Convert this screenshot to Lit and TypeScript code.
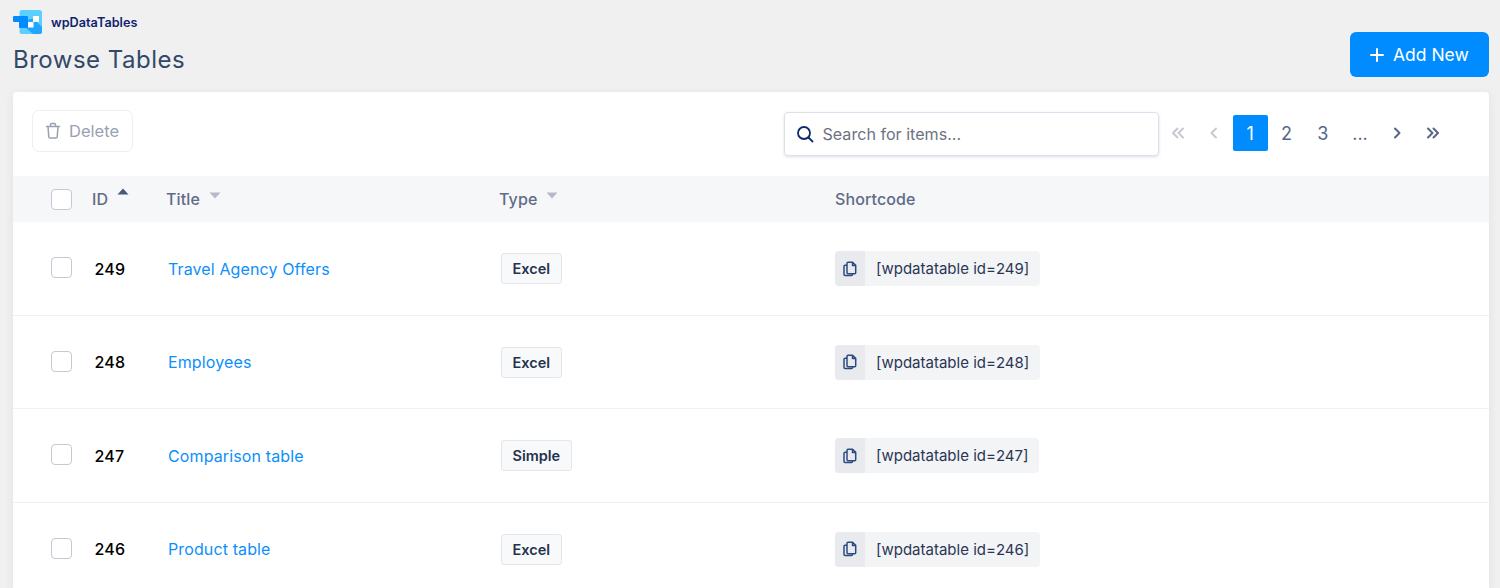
import { LitElement, css, html, svg } from 'lit';
import { customElement, property } from 'lit/decorators.js';

type Row = { id: number; title: string; type: string };

const rows: Row[] = [
  { id: 249, title: 'Travel Agency Offers', type: 'Excel' },
  { id: 248, title: 'Employees', type: 'Excel' },
  { id: 247, title: 'Comparison table', type: 'Simple' },
  { id: 246, title: 'Product table', type: 'Excel' },
];

const logo = svg`<svg width="29" height="24" viewBox="0 0 29 24">
  <rect x="6.5" y="0" width="22.5" height="24" rx="2.5" fill="#5ccfff"/>
  <path d="M12 17 L20 24 L26.5 24 Q29 24 29 21.5 L29 17 L21 9 L16 9 Z" fill="#1ea7fd"/>
  <rect x="0" y="6" width="12" height="6" rx="1" fill="#008cff"/>
  <rect x="6" y="6" width="9" height="12" rx="1" fill="#008cff"/>
  <rect x="20" y="6" width="6" height="6" fill="#ffffff"/>
  <rect x="15" y="12" width="5.5" height="5.5" fill="#ffffff"/>
</svg>`;

const copyIcon = svg`<svg width="16" height="18" viewBox="0 0 16 18" fill="none" stroke="#2a4a80" stroke-width="1.5" stroke-linejoin="round">
  <path d="M5 3.2 a1 1 0 0 1 1-1 h4.5 l3.2 3.2 v7.4 a1 1 0 0 1-1 1 H6 a1 1 0 0 1-1-1 Z"/>
  <path d="M5 5.2 H3 a1 1 0 0 0-1 1 v8.4 a1 1 0 0 0 1 1 h6.5 a1 1 0 0 0 1-1 v-1.7"/>
  <path d="M10.5 2.2 v3.2 h3.2"/>
</svg>`;

const chevron = (d: string, color: string) => svg`<svg width="18" height="18" viewBox="0 0 18 18" fill="none" stroke=${color} stroke-width="2" stroke-linecap="round" stroke-linejoin="round"><path d=${d}/></svg>`;

@customElement('sort-caret')
export class SortCaret extends LitElement {
  @property({ type: Boolean }) active = false;

  render() {
    return html`<svg class=${this.active ? 'up' : 'down'} width="12" height="7" viewBox="0 0 12 7">
      <path d=${this.active ? 'M6 0.5 L11.5 6.5 H0.5 Z' : 'M0.5 0.5 H11.5 L6 6.5 Z'} />
    </svg>`;
  }

  static styles = css`
    :host { display: inline-flex; }
    .up { fill: #475a7c; }
    .down { fill: #b5bac8; }
  `;
}

@customElement('app-root')
export class AppRoot extends LitElement {
  render() {
    return html`
      <div class="page">
        <header class="head">
          <div>
            <div class="brand">${logo}<span>wpDataTables</span></div>
            <h1>Browse Tables</h1>
          </div>
          <button class="add">
            <svg width="16" height="16" viewBox="0 0 16 16" stroke="#fff" stroke-width="2" stroke-linecap="round"><path d="M8 2 V14 M2 8 H14"/></svg>
            Add New
          </button>
        </header>

        <section class="card">
          <div class="toolbar">
            <button class="delete">
              <svg width="16" height="18" viewBox="0 0 16 18" fill="none" stroke="#9aa1b2" stroke-width="1.5" stroke-linecap="round" stroke-linejoin="round">
                <path d="M1.5 4.5 H14.5 M5.5 4.5 V2.5 a1 1 0 0 1 1-1 h3 a1 1 0 0 1 1 1 V4.5 M3 4.5 L3.8 15 a1.2 1.2 0 0 0 1.2 1 h6 a1.2 1.2 0 0 0 1.2-1 L13 4.5"/>
              </svg>
              Delete
            </button>
            <div class="search">
              <svg width="18" height="18" viewBox="0 0 18 18" fill="none" stroke="#10296e" stroke-width="1.8" stroke-linecap="round"><circle cx="8" cy="8" r="6"/><path d="M12.5 12.5 L16.5 16.5"/></svg>
              <span>Search for items...</span>
            </div>
            <nav class="pager">
              <span class="pg">${chevron('M8.5 4.5 L4 9 L8.5 13.5 M14 4.5 L9.5 9 L14 13.5', '#c6c9d2')}</span>
              <span class="pg">${chevron('M11 4.5 L6.5 9 L11 13.5', '#c6c9d2')}</span>
              <span class="pg current">1</span>
              <span class="pg">2</span>
              <span class="pg">3</span>
              <span class="pg dots">...</span>
              <span class="pg next-one">${chevron('M7 4.5 L11.5 9 L7 13.5', '#566689')}</span>
              <span class="pg next">${chevron('M4 4.5 L8.5 9 L4 13.5 M9.5 4.5 L14 9 L9.5 13.5', '#566689')}</span>
            </nav>
          </div>

          <div class="grid thead">
            <span class="check"></span>
            <span class="th">ID <sort-caret class="c-id" active></sort-caret></span>
            <span class="th">Title <sort-caret></sort-caret></span>
            <span class="th">Type <sort-caret></sort-caret></span>
            <span class="th">Shortcode</span>
          </div>

          ${rows.map(r => html`
            <div class="grid row">
              <span class="check"></span>
              <span class="id">${r.id}</span>
              <a class="title">${r.title}</a>
              <span class="type-cell"><span class="type">${r.type}</span></span>
              <span class="code">
                <span class="copy">${copyIcon}</span>
                <span class="text">[wpdatatable id=${r.id}]</span>
              </span>
            </div>
          `)}
        </section>
      </div>
    `;
  }

  static styles = css`
    :host {
      display: block;
      height: 588px;
      overflow: hidden;
      background: #f0f0f1;
      font-family: Inter, "Liberation Sans", sans-serif;
    }
    .page { padding: 10px 11px 0 13px; }
    .head {
      display: flex;
      justify-content: space-between;
      align-items: flex-start;
      height: 82px;
    }
    .brand {
      display: flex;
      align-items: center;
      gap: 9px;
      height: 24px;
      font-size: 12.7px;
      font-weight: 600;
      color: #10256e;
    }
    .brand svg { display: block; }
    h1 {
      margin: 9px 0 0;
      font-size: 24px;
      line-height: 34px;
      font-weight: 400;
      letter-spacing: 0.5px;
      color: #334868;
    }
    button { font-family: inherit; cursor: pointer; }
    .add {
      display: flex;
      align-items: center;
      gap: 8px;
      margin-top: 22px;
      width: 139px;
      height: 45px;
      padding: 0 0 0 19px;
      border: 0;
      border-radius: 6px;
      background: #008cff;
      color: #fff;
      font-size: 17.5px;
      font-weight: 400;
    }
    .card {
      background: #fff;
      border-radius: 4px;
      box-shadow: 0 2px 12px rgba(30, 40, 70, 0.06);
    }
    .toolbar {
      display: flex;
      align-items: flex-start;
      height: 84px;
      padding: 18px 0 0 19px;
      box-sizing: border-box;
    }
    .delete {
      display: flex;
      align-items: center;
      gap: 8px;
      width: 101px;
      height: 42px;
      padding: 0 0 0 12px;
      background: #fff;
      border: 1px solid #eceef2;
      border-radius: 7px;
      color: #9aa1b2;
      font-size: 16.5px;
    }
    .search {
      display: flex;
      align-items: center;
      gap: 8.5px;
      width: 375px;
      height: 44px;
      margin: 2px 0 0 651px;
      padding-left: 11px;
      box-sizing: border-box;
      border: 1px solid #dcdfec;
      border-radius: 4px;
      box-shadow: 0 1px 3px rgba(40, 50, 90, 0.16);
      color: #6d7280;
      font-size: 16.1px;
    }
    .pager {
      display: flex;
      align-items: center;
      margin: 5px 0 0 1px;
    }
    .pg {
      display: flex;
      align-items: center;
      justify-content: center;
      width: 35px;
      height: 36px;
      margin-right: 1.3px;
      border-radius: 2px;
      color: #566689;
      font-size: 18px;
    }
    .current { background: #008cff; color: #fff; }
    .dots { align-items: flex-end; padding: 0 0 8px 2px; box-sizing: border-box; line-height: 1; }
    .next svg { margin-left: 2px; }
    .next-one svg { margin-left: 3px; }
    .grid {
      display: grid;
      grid-template-columns: 41px 74px 333px 336px 1fr;
      align-items: center;
      padding-left: 38px;
    }
    .thead { height: 46px; background: #f6f7f9; }
    .row { height: 93.5px; border-bottom: 1px solid #f0f1f4; box-sizing: border-box; }
    .check {
      display: block;
      width: 19px;
      height: 19px;
      background: #fff;
      border: 1px solid #c6c9d2;
      border-radius: 4px;
    }
    .row .check { margin-top: -1px; }
    .th {
      display: flex;
      gap: 9px;
      color: #5f6b87;
      font-size: 16px;
      font-weight: 500;
      letter-spacing: 0.12px;
    }
    .th sort-caret { margin-top: 3px; height: 7px; }
    .th .c-id { margin-top: -1px; }
    .id {
      padding: 1px 0 0 2.5px;
      font-size: 16px;
      font-weight: 500;
      letter-spacing: 0.2px;
      color: #000;
    }
    .title {
      padding: 1px 0 0 2px;
      font-size: 16px;
      letter-spacing: 0.12px;
      color: #0d8ffa;
    }
    .type-cell { padding-top: 1px; }
    .type {
      display: inline-block;
      margin-left: 2px;
      padding: 0 10.5px;
      height: 29px;
      line-height: 29px;
      background: #f8f9fb;
      border: 1px solid #e4e6eb;
      border-radius: 3px;
      font-size: 14.5px;
      font-weight: 600;
      color: #25324e;
    }
    .code {
      display: inline-flex;
      justify-self: start;
      align-items: center;
      height: 35px;
      margin-top: 0.6px;
      background: #f3f4f6;
      border-radius: 4px;
      overflow: hidden;
    }
    .copy {
      display: flex;
      align-items: center;
      justify-content: center;
      width: 30px;
      height: 100%;
      background: #e9eaee;
    }
    .text {
      padding: 0 11px;
      font-size: 15px;
      color: #2a3654;
    }
  `;
}
